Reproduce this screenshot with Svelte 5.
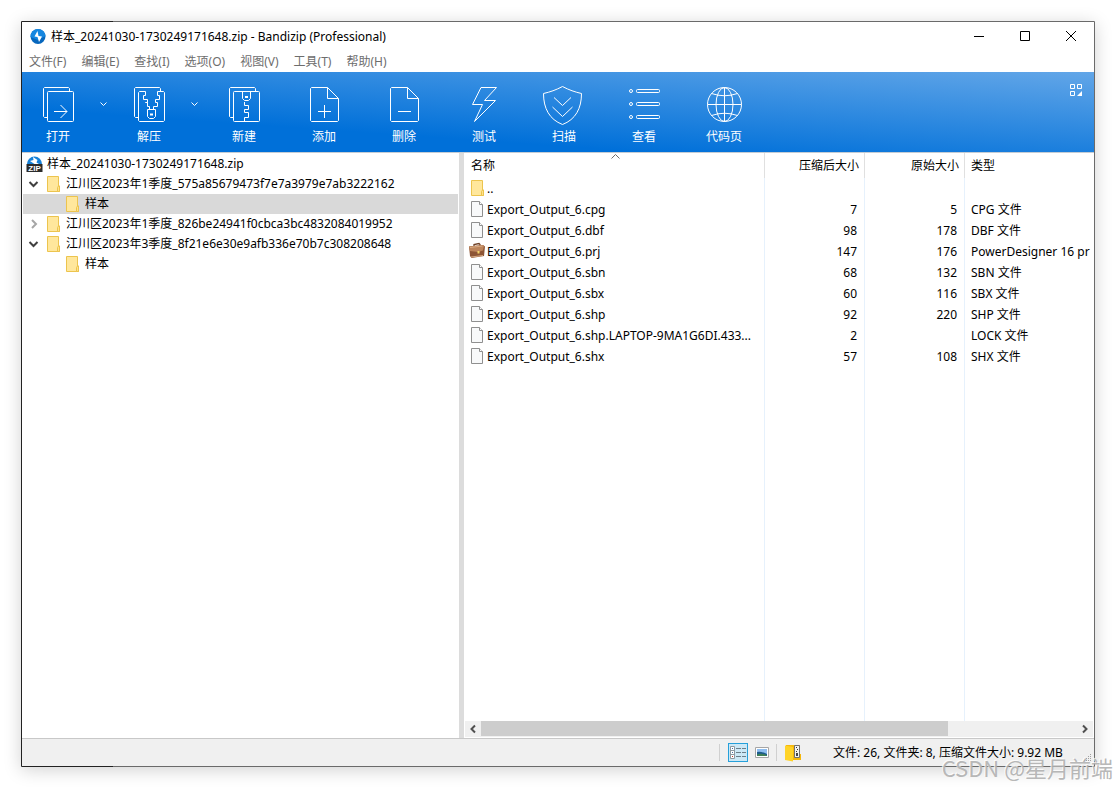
<script>
  const menus = ['文件(F)', '编辑(E)', '查找(I)', '选项(O)', '视图(V)', '工具(T)', '帮助(H)'];

  const tools = [
    { id: 'open', label: '打开', drop: true },
    { id: 'extract', label: '解压', drop: true },
    { id: 'new', label: '新建' },
    { id: 'add', label: '添加' },
    { id: 'delete', label: '删除' },
    { id: 'test', label: '测试' },
    { id: 'scan', label: '扫描' },
    { id: 'view', label: '查看' },
    { id: 'codepage', label: '代码页' }
  ];

  const tree = [
    { level: 1, state: 'open', name: '江川区2023年1季度_575a85679473f7e7a3979e7ab3222162' },
    { level: 2, state: 'leaf', name: '样本' },
    { level: 1, state: 'closed', name: '江川区2023年1季度_826be24941f0cbca3bc4832084019952' },
    { level: 1, state: 'open', name: '江川区2023年3季度_8f21e6e30e9afb336e70b7c308208648' },
    { level: 2, state: 'leaf', name: '样本' }
  ];
  let selected = $state(1);

  const files = [
    { icon: 'folder', name: '..', packed: '', size: '', type: '' },
    { icon: 'file', name: 'Export_Output_6.cpg', packed: '7', size: '5', type: 'CPG 文件' },
    { icon: 'file', name: 'Export_Output_6.dbf', packed: '98', size: '178', type: 'DBF 文件' },
    { icon: 'case', name: 'Export_Output_6.prj', packed: '147', size: '176', type: 'PowerDesigner 16 pr' },
    { icon: 'file', name: 'Export_Output_6.sbn', packed: '68', size: '132', type: 'SBN 文件' },
    { icon: 'file', name: 'Export_Output_6.sbx', packed: '60', size: '116', type: 'SBX 文件' },
    { icon: 'file', name: 'Export_Output_6.shp', packed: '92', size: '220', type: 'SHP 文件' },
    { icon: 'file', name: 'Export_Output_6.shp.LAPTOP-9MA1G6DI.433...', packed: '2', size: '', type: 'LOCK 文件' },
    { icon: 'file', name: 'Export_Output_6.shx', packed: '57', size: '108', type: 'SHX 文件' }
  ];
</script>

{#snippet folder()}
  <svg width="16" height="16" viewBox="0 0 16 16" aria-hidden="true">
    <path d="M1.5 .5h11v9.5h1v5.5h-12z" fill="#ffe79c" stroke="#ecc44e" />
    <path d="M11.5 15.5v-4l1-1.5h1v5.5z" fill="#ffe28a" stroke="#ecc44e" />
  </svg>
{/snippet}

{#snippet page()}
  <svg width="16" height="16" viewBox="0 0 16 16" aria-hidden="true">
    <path d="M1.5 .5h8l3 3v12h-11z" fill="#f8f9fa" stroke="#8f8f8f" />
    <path d="M9.5 .5v3h3" fill="#fff" stroke="#8f8f8f" />
  </svg>
{/snippet}

{#snippet briefcase()}
  <svg width="16" height="16" viewBox="0 0 16 16" aria-hidden="true">
    <path d="M5 3V1.500l5-1 1 1V3" fill="none" stroke="#6e4026" stroke-width="1.300" />
    <path d="M0 3.500 14 2l2 1.500-1 9.500L2.500 15 1 13z" fill="#8d5535" />
    <path d="M0 3.500 14 2l1 1-1 4.500-5 1.500-8-1z" fill="#bd855c" />
    <path d="M1 4.500 13.500 3M2 14l12-1.500" stroke="#d9ab83" />
    <path d="M8.500 8h2v2.500h-2z" fill="#f4d66b" />
  </svg>
{/snippet}

<main class="window">
  <header class="titlebar">
    <svg width="16" height="16" viewBox="0 0 16 16" aria-hidden="true">
      <circle cx="8" cy="7.500" r="7.500" fill="#0767bd" />
      <path d="M.5 8A7.500 7.500 0 0 1 15.500 7L8 11z" fill="#1687e0" />
      <path d="M7.500 2 4.500 7.500l3 .5L9 13l3-5.500L8.500 7z" fill="#fff" />
    </svg>
    <h1>样本_20241030-1730249171648.zip - Bandizip (Professional)</h1>
    <div class="caption">
      <button aria-label="最小化"><svg width="10" height="10"><path d="M0 5.500h10" /></svg></button>
      <button aria-label="最大化"><svg width="10" height="10"><path d="M.5 .5h9v9h-9z" /></svg></button>
      <button aria-label="关闭"><svg width="10" height="10"><path d="M0 0l10 10M10 0 0 10" /></svg></button>
    </div>
  </header>

  <nav class="menubar">
    {#each menus as m}<button>{m}</button>{/each}
  </nav>

  <div class="toolbar">
    {#each tools as t}
      <button class="tool" class:split={t.drop}>
        <svg width="40" height="40" viewBox="0 0 40 40" aria-hidden="true">
          {#if t.id === 'open' || t.id === 'extract' || t.id === 'new'}
            <path d="M9 33.500H6.500L5.500 32.500V4.500L6.500 3.500H30.500L31.500 4.500V7" />
          {/if}
          {#if t.id === 'open'}
            <rect x="9.500" y="7.500" width="26" height="30" rx="1" />
            <path d="M16 27.500h13M22.500 21l6.500 6.500-6.500 6.500" />
          {:else if t.id === 'extract'}
            <path d="M20.500 25v-2.500h-2v-4h-2v0h2v-3h-4v-4h2v-4H10.500L9.500 8.500V36.500l1 1H34.500l1-1V8.500L34.500 7.500H28.500v4h2v4h-4v3h2v4h-4V25" />
            <path d="M18.500 25.500h8v7l-2 2h-4l-2-2z" />
            <path d="M21 30.500h3" stroke-width="2" />
          {:else if t.id === 'new'}
            <rect x="9.500" y="7.500" width="26" height="30" rx="1" />
            <path d="M18.500 8v6.500l2 2h4l2-2V8M20.500 18v3.500h4v4h-4v3h4v5h-4v4" />
            <path d="M21 13h3" stroke-width="2" />
          {:else if t.id === 'add' || t.id === 'delete'}
            <path d="M23.500 3.500H7.500L6.500 4.500V36.500L7.500 37.500H33.500l1-1V14.500zV14.500h11" />
            <path d="M14 27.500h13" />
            {#if t.id === 'add'}<path d="M20.500 21v13" />{/if}
          {:else if t.id === 'test'}
            <path d="M17 3.500H32.500L20.500 16.500H31.500L10.500 37.500 18.500 20.500H8.500z" />
          {:else if t.id === 'scan'}
            <path d="M18.500 2.500C12 6 6 8-.5 9.500c0 15 6 26 19 31 13-5 19-16 19-31C31 8 25 6 18.500 2.500z" />
            <path d="M10 13.500l8.500 8 8.500-8M8.500 23l10 9.500 10-9.500" />
          {:else if t.id === 'view'}
            {#each [7, 20, 33] as y}
              <circle cx="7" cy={y} r="1.500" />
              <rect x="12.500" y={y - 1.5} width="23" height="3" rx="1" />
            {/each}
          {:else}
            <circle cx="20.500" cy="20.500" r="17" />
            <ellipse cx="20.500" cy="20.500" rx="8.500" ry="17" />
            <path d="M20.500 3.500v34M3.500 20.500h34M7.500 9.500q13 4.500 26 0M7.500 31.500q13-4.500 26 0" />
          {/if}
        </svg>
        <span>{t.label}</span>
      </button>
      {#if t.drop}
        <button class="drop" aria-label="{t.label}选项">
          <svg width="7" height="5" viewBox="0 0 7 5"><path d="M.5 .5l3 3 3-3" /></svg>
        </button>
      {/if}
    {/each}
    <button class="layout" aria-label="布局">
      <svg width="12" height="12" viewBox="0 0 12 12">
        <path d="M.5 .5h4v4h-4zM7.500 .5h4v4h-4zM.5 7.500h4v4h-4z" />
        <path d="M12 7v5H7z" class="solid" />
      </svg>
    </button>
  </div>

  <div class="body">
    <aside class="tree">
      <div class="root">
        <svg width="17" height="18" viewBox="0 0 17 18" aria-hidden="true">
          <path d="M1 9a7.500 7.500 0 0 1 15 0z" fill="#1681d8" />
          <path d="M7 2l4.500 3-1 2.500L13 9H8.500L4 6l3.500-1z" fill="#fff" />
          <rect x=".5" y="9" width="16" height="8" fill="#2b2b2b" />
          <text x="8.500" y="16">ZIP</text>
        </svg>
        <span>样本_20241030-1730249171648.zip</span>
      </div>
      {#each tree as node, i}
        <button class="node" class:deep={node.level === 2} class:selected={selected === i} onclick={() => (selected = i)}>
          {#if node.state !== 'leaf'}
            <svg class="twist" class:closed={node.state === 'closed'} width="9" height="10" viewBox="0 0 9 10" aria-hidden="true">
              <path d={node.state === 'open' ? 'M.5 3l4 4 4-4' : 'M3 1l4 4-4 4'} />
            </svg>
          {/if}
          {@render folder()}
          <span>{node.name}</span>
        </button>
      {/each}
    </aside>

    <section class="pane">
      <div class="list">
        <svg class="sort" width="9" height="5" viewBox="0 0 9 5" aria-hidden="true"><path d="M.5 4.500l4-4 4 4" /></svg>
        <table>
          <colgroup><col class="c-name" /><col class="c-num" /><col class="c-num" /><col /></colgroup>
          <thead>
            <tr><th>名称</th><th class="num">压缩后大小</th><th class="num">原始大小</th><th>类型</th></tr>
          </thead>
          <tbody>
            {#each files as f}
              <tr>
                <td class="name">
                  <div class:wide={f.icon === 'case'}>
                    {#if f.icon === 'folder'}{@render folder()}{:else if f.icon === 'case'}{@render briefcase()}{:else}{@render page()}{/if}
                    <span>{f.name}</span>
                  </div>
                </td>
                <td class="num">{f.packed}</td>
                <td class="num">{f.size}</td>
                <td>{f.type}</td>
              </tr>
            {/each}
          </tbody>
        </table>
      </div>
      <div class="scroll">
        <button aria-label="向左滚动"><svg width="6" height="8" viewBox="0 0 6 8"><path d="M5 .5 1.500 4 5 7.500" /></svg></button>
        <div class="track"><div class="thumb"></div></div>
        <button aria-label="向右滚动"><svg width="6" height="8" viewBox="0 0 6 8"><path d="M1 .5 4.500 4 1 7.500" /></svg></button>
      </div>
    </section>
  </div>

  <footer class="status">
    <i class="sep"></i>
    <button class="mode on" aria-label="详细信息">
      <svg width="16" height="13" viewBox="0 0 16 13">
        <path d="M.5 .5h4v12h-4zM.5 4.500h4M.5 8.500h4" fill="#fff" stroke="#8e9aa2" />
        <path d="M2 2.500h1M2 6.500h1" stroke="#4a6fa5" />
        <path d="M2 10.500h1" stroke="#c0392b" />
        <path d="M6 2.500h5M12 2.500h4M6 6.500h5M12 6.500h4M6 10.500h5M12 10.500h4" stroke="#6d7f8a" />
      </svg>
    </button>
    <button class="mode" aria-label="缩略图">
      <svg width="14" height="11" viewBox="0 0 14 11">
        <path d="M.5 .5h13v10H.5z" fill="#fff" stroke="#a6a6a6" />
        <path d="M2 2h10v7H2z" fill="#8dbdf0" />
        <path d="M2 5q4-1 10 2v2H2z" fill="#1d5c8c" />
        <path d="M2 7.500q5-2 10 1V9H2z" fill="#3f7f56" />
      </svg>
    </button>
    <i class="sep"></i>
    <svg class="zipf" width="17" height="18" viewBox="0 0 17 18" aria-hidden="true">
      <path d="M1 1h14v9h1v6H1z" fill="#f5b70c" />
      <path d="M0 1.500 8 3v14.500L0 16z" fill="#ffd327" />
      <path d="M9.500 1.500h5v12h-5z" fill="#f2f2f2" stroke="#707070" />
      <path d="M11 3.500h1M12 5.500h1M11 7.500h1" stroke="#333" />
      <path d="M12 9v3" stroke="#444" stroke-width="2" />
    </svg>
    <span class="info">文件: 26, 文件夹: 8, 压缩文件大小: 9.92 MB</span>
    <svg class="grip" width="9" height="9" viewBox="0 0 9 9" aria-hidden="true">
      <path d="M7 1.500h1M5 3.500h1M7 3.500h1M3 5.500h1M5 5.500h1M7 5.500h1M1 7.500h1M3 7.500h1M5 7.500h1M7 7.500h1" />
    </svg>
  </footer>
</main>
<div class="watermark">CSDN @星月前端</div>

<style>
  :global(body) {
    background: #fff;
    overflow: hidden;
  }
  :global(#app) {
    box-sizing: border-box;
    min-height: 100vh;
    padding: 21px;
    display: flex;
    position: relative;
    font: 12px/16px 'Noto Sans', 'Noto Sans CJK SC', sans-serif;
    color: #000;
  }
  button {
    font: inherit;
    color: inherit;
    background: none;
    border: 0;
    padding: 0;
    margin: 0;
    white-space: nowrap;
  }
  svg {
    display: block;
    flex: none;
    overflow: visible;
  }
  .window {
    flex: 1;
    min-width: 0;
    display: flex;
    flex-direction: column;
    padding: 1px;
    border-radius: 1px;
    background: linear-gradient(90deg, #222 92px, #6a6a6a 92px);
    box-shadow: 0 3px 18px rgba(0, 0, 0, 0.18);
  }
  .titlebar {
    display: flex;
    align-items: center;
    gap: 5px;
    height: 29px;
    padding-left: 8px;
    background: #fff;
  }
  h1 {
    margin: 0;
    font: inherit;
    flex: 1;
  }
  .caption {
    display: flex;
  }
  .caption button {
    width: 46px;
    height: 29px;
    padding-bottom: 1px;
    display: grid;
    place-items: center;
  }
  .caption path {
    fill: none;
    stroke: #000;
  }
  .menubar {
    display: flex;
    gap: 15px;
    height: 21px;
    padding-left: 7px;
    background: #fff;
    color: #6d6d6d;
  }
  .toolbar {
    display: flex;
    height: 80px;
    background: linear-gradient(4deg, #0070d9 28%, #62a6e8);
    border-bottom: 1px solid #c4ccd4;
    color: #fff;
  }
  .toolbar path,
  .toolbar rect,
  .toolbar circle,
  .toolbar ellipse {
    fill: none;
    stroke: #fff;
  }
  .tool {
    width: 80px;
    display: flex;
    flex-direction: column;
    align-items: center;
    gap: 5px;
    padding-top: 12px;
  }
  .tool.split {
    width: 72px;
  }
  .drop {
    width: 19px;
    height: 64px;
    display: grid;
    place-items: center;
  }
  .layout {
    margin-left: auto;
    padding: 12px;
    align-self: flex-start;
  }
  .toolbar .solid {
    fill: #fff;
    stroke: none;
  }
  .body {
    flex: 1;
    min-height: 0;
    display: grid;
    grid-template-columns: minmax(0, 442fr) minmax(0, 630fr);
    background: #fff;
  }
  .tree {
    border-right: 5px solid #dcdcdc;
    padding: 1px 1px 0;
    overflow: hidden;
  }
  .root,
  .node {
    display: flex;
    align-items: center;
    height: 20px;
    gap: 4px;
  }
  .root {
    padding-left: 3px;
  }
  .root text {
    font: bold 8px 'Liberation Sans', sans-serif;
    fill: #fff;
    text-anchor: middle;
  }
  .node {
    width: 100%;
    padding-left: 6px;
  }
  .node.deep {
    padding-left: 42px;
  }
  .node.selected {
    background: #d9d9d9;
  }
  .twist {
    margin-right: 4px;
  }
  .twist path {
    fill: none;
    stroke: #404040;
    stroke-width: 2;
  }
  .twist.closed path {
    stroke: #a6a6a6;
  }
  .pane {
    display: flex;
    flex-direction: column;
    min-width: 0;
    padding: 0 1px 1px 1px;
  }
  .list {
    flex: 1;
    position: relative;
    overflow: hidden;
    background:
      linear-gradient(#e6f1fc, #e6f1fc) 299px 0 / 1px 100% no-repeat,
      linear-gradient(#e6f1fc, #e6f1fc) 399px 0 / 1px 100% no-repeat,
      linear-gradient(#e6f1fc, #e6f1fc) 499px 0 / 1px 100% no-repeat;
  }
  .sort {
    position: absolute;
    left: 146px;
    top: 1px;
  }
  .sort path {
    fill: none;
    stroke: #6d6d6d;
  }
  table {
    width: 100%;
    table-layout: fixed;
    border-collapse: separate;
    border-spacing: 0;
  }
  .c-name {
    width: 300px;
  }
  .c-num {
    width: 100px;
  }
  th {
    height: 25px;
    padding: 0 6px;
    text-align: left;
    font-weight: normal;
    border-right: 1px solid #e0e0e0;
    box-sizing: border-box;
  }
  th:last-child {
    border-right: 0;
  }
  th.num {
    padding-right: 5px;
  }
  td {
    height: 21px;
    padding: 0 0 0 6px;
    white-space: nowrap;
    overflow: hidden;
  }
  .num {
    text-align: right;
  }
  td.num {
    padding-right: 8px;
  }
  .name {
    padding-left: 5px;
  }
  .name div {
    display: flex;
    align-items: flex-end;
    gap: 1px;
  }
  .name svg {
    margin-bottom: 1px;
  }
  .name .wide {
    margin-left: -1px;
    gap: 2px;
  }
  .scroll {
    display: flex;
    height: 16px;
    background: #f0f0f0;
  }
  .scroll button {
    width: 16px;
    display: grid;
    place-items: center;
  }
  .scroll path {
    fill: none;
    stroke: #505050;
    stroke-width: 2;
  }
  .track {
    flex: 1;
  }
  .thumb {
    width: 78.4%;
    height: 15px;
    background: #cdcdcd;
  }
  .status {
    display: flex;
    align-items: center;
    justify-content: flex-end;
    height: 27px;
    border-top: 1px solid #c8c8c8;
    background: #f0f0f0;
  }
  .sep {
    width: 1px;
    height: 17px;
    margin-right: 8px;
    background: #d0d0d0;
  }
  .mode {
    width: 20px;
    height: 19px;
    box-sizing: border-box;
    display: grid;
    place-items: center;
    margin-right: 4px;
  }
  .mode.on {
    border: 1px solid #26a0da;
    background: #cce8f6;
  }
  .zipf {
    margin-right: 31px;
  }
  .info {
    min-width: 236px;
    margin-right: 14px;
  }
  .grip {
    align-self: flex-end;
    margin: 0 2px 4px 0;
  }
  .grip path {
    stroke: #a0a0a0;
  }
  .watermark {
    position: absolute;
    right: 3px;
    bottom: 8px;
    font: 22px/26px 'Noto Sans CJK SC', sans-serif;
    color: rgba(175, 175, 175, 0.9);
    text-shadow: -1px -1px 0 rgba(255, 255, 255, 0.8);
    white-space: nowrap;
  }
</style>
